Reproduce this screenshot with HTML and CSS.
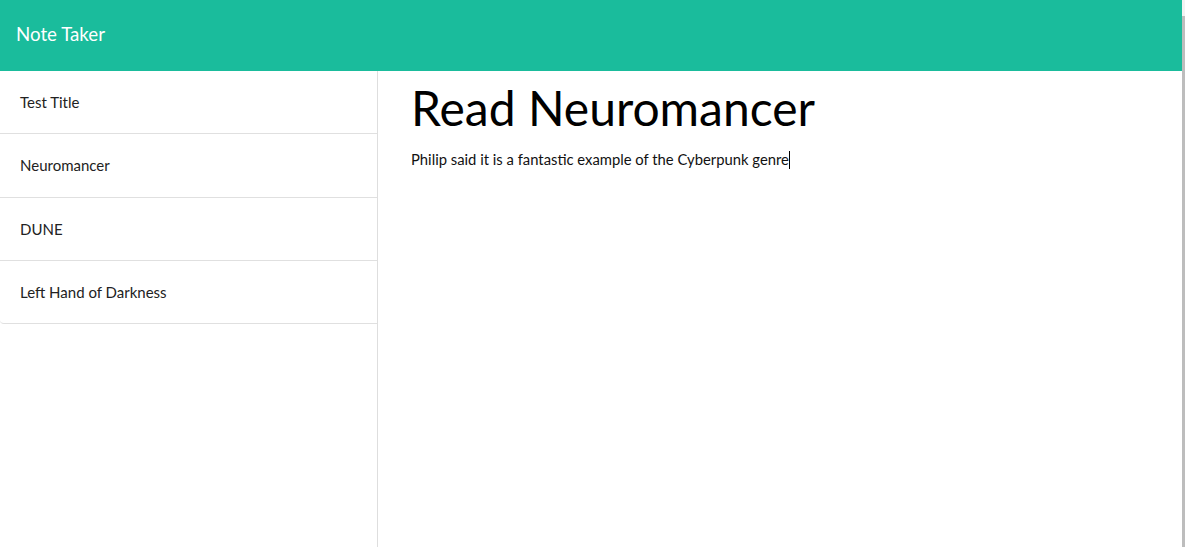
FILE: index.html
```html
<!DOCTYPE html>
<html lang="en">
<head>
<meta charset="utf-8">
<title>Note Taker</title>
<link rel="stylesheet" href="styles.css">
</head>
<body>
<div class="page">
  <div class="app">
    <nav class="navbar"><span class="brand">Note Taker</span></nav>
    <div class="body-row">
      <aside class="sidebar">
        <ul class="list">
          <li class="item">Test Title</li>
          <li class="item">Neuromancer</li>
          <li class="item">DUNE</li>
          <li class="item">Left Hand of Darkness</li>
        </ul>
      </aside>
      <main class="note">
        <h1 class="note-title">Read Neuromancer</h1>
        <p class="note-text">Philip said it is a fantastic example of the Cyberpunk genre<span class="caret"></span></p>
      </main>
    </div>
  </div>
  <div class="edge"><div class="edge-line"></div></div>
</div>
</body>
</html>
```

FILE: styles.css
```css
html, body {
  margin: 0;
  padding: 0;
  height: 100%;
}
body {
  font-family: Lato, "Open Sans", sans-serif;
  background: #fff;
  color: #212529;
  overflow: hidden;
}
.page {
  display: flex;
  height: 547px;
}
.app {
  width: 1182px;
  display: flex;
  flex-direction: column;
}
.navbar {
  height: 71px;
  background: #1abc9c;
  display: flex;
  align-items: center;
  padding-left: 16px;
  box-sizing: border-box;
}
.brand {
  color: #fff;
  font-size: 18.7px;
  line-height: 1;
  padding-bottom: 2px;
}
.body-row {
  flex: 1;
  display: flex;
}
.sidebar {
  width: 377px;
  border-right: 1px solid #dedede;
}
.list {
  list-style: none;
  margin: 0;
  padding: 0;
}
.item {
  height: 62.3px;
  display: flex;
  align-items: center;
  padding-left: 20px;
  font-size: 15px;
  color: #222;
  border-bottom: 1px solid #e0e0e0;
}
.item:last-child {
  border-bottom-left-radius: 4px;
}
.note {
  flex: 1;
  padding: 8px 0 0 33px;
}
.note-title {
  margin: 0;
  font-size: 48px;
  font-weight: 400;
  line-height: 1.2;
  color: #000;
}
.note-text {
  margin: 11px 0 0;
  font-size: 14.8px;
  line-height: 22px;
  color: #111;
}
.caret {
  display: inline-block;
  width: 1px;
  height: 18px;
  background: #000;
  vertical-align: -4px;
}
.edge {
  width: 3px;
  background: #f2f2f2;
  display: flex;
  justify-content: center;
  padding-top: 16px;
  box-sizing: border-box;
}
.edge-line {
  width: 1px;
  background: #bdbdbd;
  flex: 1;
}
```
